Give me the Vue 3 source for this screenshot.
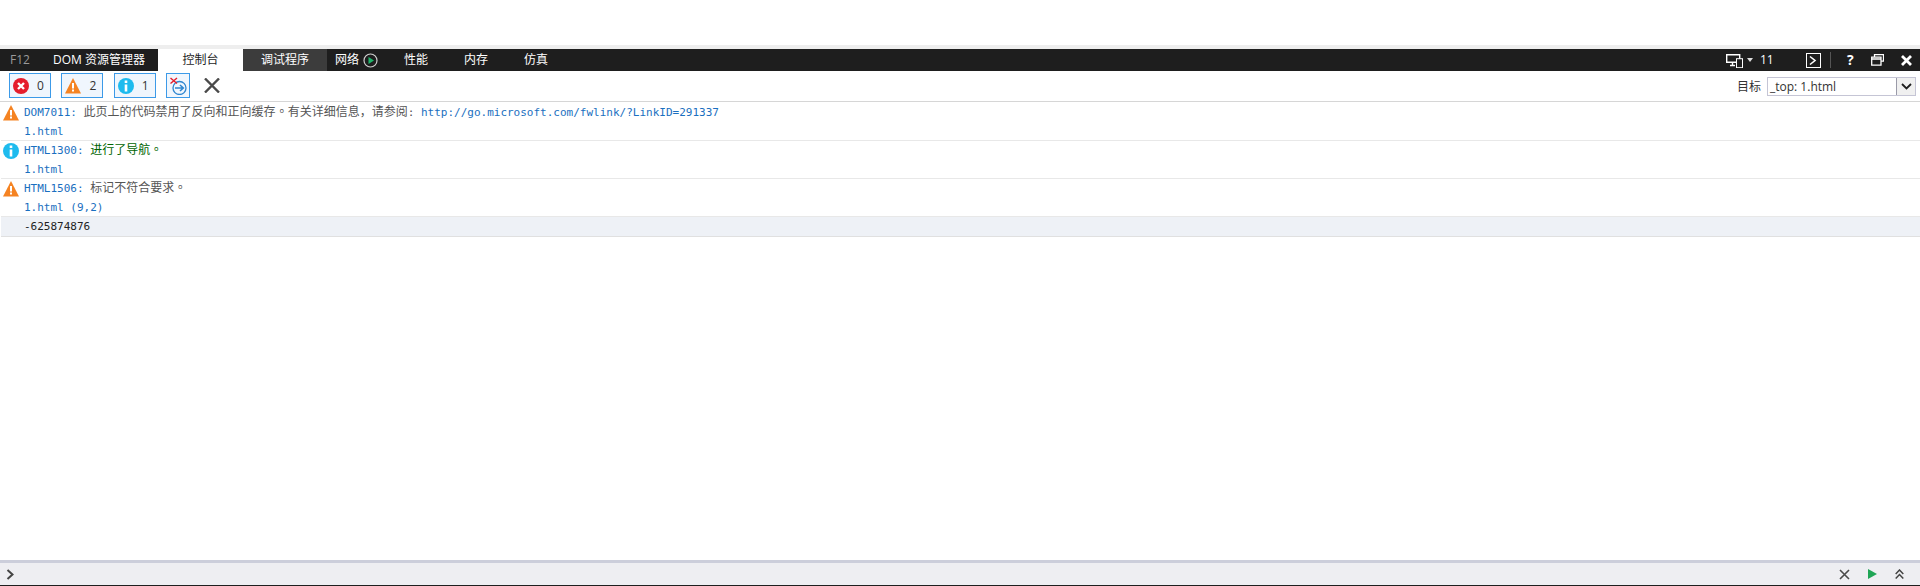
<script setup>
const split = (s) => s.split(/(。)/).filter(Boolean)
const rows = [
  { kind: 'warn', code: 'DOM7011', msg: split('此页上的代码禁用了反向和正向缓存。有关详细信息，请参阅'), tail: ': ', link: 'http://go.microsoft.com/fwlink/?LinkID=291337', src: '1.html' },
  { kind: 'info', code: 'HTML1300', msg: split('进行了导航。'), green: true, src: '1.html' },
  { kind: 'warn', code: 'HTML1506', msg: split('标记不符合要求。'), src: '1.html (9,2)' }
]
</script>

<template>
  <div class="page">
    <div class="top"></div>
    <div class="tabs">
      <span class="f12">F12</span>
      <span class="tab dom">DOM 资源管理器</span>
      <span class="tab active">控制台</span>
      <span class="tab debug">调试程序</span>
      <span class="tab net">网络
        <svg class="play" width="15" height="15" viewBox="0 0 15 15"><circle cx="7.5" cy="7.5" r="6.500" fill="none" stroke="#cfcfcf" stroke-width="1.200"/><path d="M5.500 4l5.500 3.500-5.500 3.500z" fill="#1fb56a"/></svg>
      </span>
      <span class="tab plain first">性能</span>
      <span class="tab plain">内存</span>
      <span class="tab plain">仿真</span>
      <div class="right">
        <svg class="ic-dev" width="17" height="15" viewBox="0 0 17 15"><path d="M.7 1.700h13v7.600h-13zM4 12.500h5M6.500 9.500v3" fill="none" stroke="#fff" stroke-width="1.400"/><rect x="10.500" y="5.700" width="6" height="9" fill="#1e1e1e" stroke="#fff"/></svg>
        <svg class="ic-tri" width="6" height="4" viewBox="0 0 6 4"><path d="M0 0h6L3 4z" fill="#ddd"/></svg>
        <span class="num">11</span>
        <svg class="ic-con" width="15" height="15" viewBox="0 0 15 15"><rect x=".5" y=".5" width="14" height="14" fill="none" stroke="#fff"/><path d="M4 3.500L9 7.500 4 11.500" fill="none" stroke="#fff" stroke-width="1.600"/></svg>
        <span class="sep"></span>
        <span class="help">?</span>
        <svg class="ic-res" width="13" height="12" viewBox="0 0 13 12"><path d="M3.500 2.500V.7h9v6.500h-2.500M.7 3.200h9.300v8H.7zM.7 5h9.300" fill="none" stroke="#fff" stroke-width="1.300"/></svg>
        <svg class="ic-x" width="11" height="11" viewBox="0 0 11 11"><path d="M1 1l9 9M10 1l-9 9" stroke="#fff" stroke-width="2.800"/></svg>
      </div>
    </div>
    <div class="toolbar">
      <button class="tool">
        <svg width="16" height="16" viewBox="0 0 16 16"><circle cx="8" cy="8" r="8" fill="#e51d2c"/><path d="M5 5l6 6M11 5l-6 6" stroke="#fff" stroke-width="2.400"/></svg>
        <span>0</span>
      </button>
      <button class="tool">
        <svg width="16" height="16" viewBox="0 0 16 16"><path d="M8 0l8 15.500H0z" fill="#f58322"/><path d="M8 5v5.500M8 11.500v2" stroke="#fff" stroke-width="2"/></svg>
        <span>2</span>
      </button>
      <button class="tool">
        <svg width="16" height="16" viewBox="0 0 16 16"><circle cx="8" cy="8" r="8" fill="#1ebbee"/><path d="M8 2.500v2.500M8 6.500v7" stroke="#fff" stroke-width="2.600"/></svg>
        <span>1</span>
      </button>
      <button class="tool nav">
        <svg width="18" height="18" viewBox="0 0 18 18"><circle cx="9.500" cy="11" r="6.500" fill="none" stroke="#2f86d0" stroke-width="1.300"/><path d="M5 11h8.500M10 8l3.300 3-3.300 3" fill="none" stroke="#2f86d0" stroke-width="1.600"/><path d="M.5 1l6.500 5.500M7 1L.5 6.500" stroke="#e51d2c" stroke-width="1.400"/></svg>
      </button>
      <svg class="clear" width="16" height="15" viewBox="0 0 16 15"><path d="M1 .5l14 14M15 .5L1 14.500" stroke="#4a4a4a" stroke-width="2.400"/></svg>
      <div class="target">
        <span class="target-label">目标</span>
        <div class="select">
          <span class="select-text">_top: 1.html</span>
          <span class="select-btn"><svg width="11" height="7" viewBox="0 0 11 7"><path d="M1 1l4.500 4.500L10 1" fill="none" stroke="#1e1e1e" stroke-width="1.800"/></svg></span>
        </div>
      </div>
    </div>
    <div class="log">
      <div v-for="r in rows" :key="r.code" class="row">
        <svg v-if="r.kind === 'warn'" class="row-ic" width="16" height="16" viewBox="0 0 16 16"><path d="M8 0l8 15.500H0z" fill="#f58322"/><path d="M8 5v5.500M8 11.500v2" stroke="#fff" stroke-width="2"/></svg>
        <svg v-else class="row-ic" width="16" height="16" viewBox="0 0 16 16"><circle cx="8" cy="8" r="8" fill="#1ebbee"/><path d="M8 2.500v2.500M8 6.500v7" stroke="#fff" stroke-width="2.600"/></svg>
        <div class="line"><span class="code">{{ r.code }}</span><span class="colon">: </span><span v-for="(m, i) in r.msg" :key="i" class="msg" :class="{ green: r.green, stop: m === '。' }">{{ m }}</span><span v-if="r.tail" class="tail">{{ r.tail }}</span><span v-if="r.link" class="code">{{ r.link }}</span></div>
        <div class="line"><span class="code">{{ r.src }}</span></div>
      </div>
      <div class="output">-625874876</div>
    </div>
    <div class="bottom">
      <svg width="9" height="11" viewBox="0 0 9 11"><path d="M1.500 1l5 4.500-5 4.500" fill="none" stroke="#444" stroke-width="2"/></svg>
      <div class="bottom-right">
        <svg width="11" height="11" viewBox="0 0 11 11"><path d="M1 1l9 9M10 1l-9 9" stroke="#4a4a4a" stroke-width="1.600"/></svg>
        <svg width="9" height="10" viewBox="0 0 9 10"><path d="M0 0l9 5-9 5z" fill="#1fa556"/></svg>
        <svg width="9" height="10" viewBox="0 0 9 10"><path d="M.7 5l3.800-4 3.800 4M.7 9.500l3.800-4 3.800 4" fill="none" stroke="#444" stroke-width="1.500"/></svg>
      </div>
    </div>
  </div>
</template>

<style scoped>
.page {
  width: 1920px;
  height: 586px;
  display: flex;
  flex-direction: column;
  background: #fff;
  overflow: hidden;
  font-family: "Open Sans", "Noto Sans CJK SC", sans-serif;
  font-size: 12px;
}
.top {
  height: 45px;
  border-bottom: 4px solid #eeeeee;
  flex: none;
}
.tabs {
  height: 22px;
  flex: none;
  background: #1e1e1e;
  color: #fff;
  display: flex;
  align-items: center;
  line-height: 22px;
}
.f12 {
  color: #9a9a9a;
  width: 53px;
  padding-left: 10px;
  box-sizing: border-box;
}
.tab {
  white-space: nowrap;
  height: 22px;
}
.dom {
  width: 105px;
}
.active {
  width: 85px;
  background: #fff;
  color: #1e1e1e;
  text-align: center;
}
.debug {
  width: 84px;
  background: #3c3c3c;
  text-align: center;
}
.net {
  display: flex;
  align-items: center;
  gap: 4px;
  padding-left: 8px;
  width: 69px;
}
.plain {
  width: 60px;
}
.right {
  margin-left: auto;
  display: flex;
  align-items: center;
  height: 22px;
}
.ic-dev {
  margin-right: 4px;
}
.ic-tri {
  margin-right: 7px;
}
.num {
  width: 46px;
  color: #fff;
}
.sep {
  width: 1px;
  height: 16px;
  background: #555;
  margin: 0 16px 0 9px;
}
.help {
  font-weight: 700;
  font-size: 14px;
  width: 24px;
}
.ic-res {
  margin-right: 17px;
}
.ic-x {
  margin-right: 8px;
}
.toolbar {
  height: 31px;
  flex: none;
  box-sizing: border-box;
  border-bottom: 1px solid #d6d6d6;
  display: flex;
  align-items: center;
  padding: 0 4px 1px 9px;
}
.tool {
  box-sizing: border-box;
  height: 25px;
  width: 42px;
  margin-right: 10.4px;
  border: 1px solid #3c9ae8;
  background: #f0f6fd;
  display: flex;
  align-items: center;
  padding: 0 0 0 3px;
  color: #333;
  font-family: inherit;
  font-size: 12px;
}
.tool span {
  margin-left: 8px;
}
.nav {
  width: 24px;
  padding-left: 3px;
  margin-right: 14px;
}
.target {
  margin-left: auto;
  margin-top: 1px;
  display: flex;
  align-items: center;
  gap: 6px;
  color: #333;
}
.select {
  width: 149px;
  height: 19px;
  box-sizing: border-box;
  border: 1px solid #c5c5d5;
  display: flex;
  align-items: center;
  justify-content: space-between;
  padding-left: 2px;
}
.select-btn {
  width: 19px;
  height: 17px;
  box-sizing: border-box;
  border-left: 1px solid #9a9aa8;
  background: #f0f0f0;
  display: flex;
  align-items: center;
  justify-content: center;
}
.log {
  flex: 1;
  padding: 1px 0 0 1px;
}
.row {
  height: 38px;
  box-sizing: border-box;
  border-bottom: 1px solid #e8e8e8;
  position: relative;
  padding-left: 23px;
}
.row:last-of-type {
  border-bottom: none;
}
.row-ic {
  position: absolute;
  left: 2px;
  top: 2px;
}
.line {
  height: 19px;
  line-height: 19px;
  white-space: nowrap;
  font-family: "DejaVu Sans Mono", "Noto Sans CJK SC", monospace;
  font-size: 11px;
}
.code,
.colon {
  color: #1a6fc0;
}
.tail {
  color: #555;
}
.msg {
  font-family: "Noto Sans CJK SC", sans-serif;
  font-size: 12px;
  line-height: 0;
  color: #555;
}
.stop {
  font-family: "Noto Sans CJK TC", sans-serif;
}
.green {
  color: #006400;
}
.output {
  height: 19px;
  line-height: 19px;
  background: #eef1f6;
  border-bottom: 1px solid #e0e0e0;
  padding-left: 23px;
  font-family: "DejaVu Sans Mono", monospace;
  font-size: 11px;
  color: #222;
}
.bottom {
  height: 26px;
  flex: none;
  box-sizing: border-box;
  border-top: 3px solid #cccedb;
  border-bottom: 1px solid #1e1e1e;
  background: #eeeef2;
  display: flex;
  align-items: center;
  justify-content: space-between;
  padding: 0 16px 0 6px;
}
.bottom-right {
  display: flex;
  align-items: center;
  gap: 18px;
}
</style>
